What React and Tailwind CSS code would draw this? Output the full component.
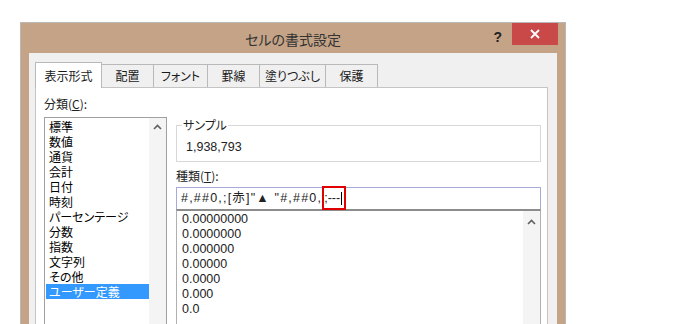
const categories = [
  '標準',
  '数値',
  '通貨',
  '会計',
  '日付',
  '時刻',
  'パーセンテージ',
  '分数',
  '指数',
  '文字列',
  'その他',
  'ユーザー定義',
];

const formats = ['0.00000000', '0.0000000', '0.000000', '0.00000', '0.0000', '0.000', '0.0'];

const tabs = [
  { label: '表示形式', w: 'w-[67px]' },
  { label: '配置', w: 'w-[53px]' },
  { label: 'フォント', w: 'w-[55px]' },
  { label: '罫線', w: 'w-[53px]' },
  { label: '塗りつぶし', w: 'w-[67px]' },
  { label: '保護', w: 'w-[53px]' },
];

const jp = "font-['Noto_Sans_CJK_JP','Noto_Sans',sans-serif] [font-feature-settings:'palt']";
const num = "font-['Liberation_Sans','Noto_Sans_CJK_JP',sans-serif]";

const UpArrow = () => (
  <svg width="9" height="6" viewBox="0 0 9 6">
    <polyline points="1,5 4.5,1.5 8,5" fill="none" stroke="#606060" strokeWidth="1.6" />
  </svg>
);

const App = () => {
  return (
    <div className={`w-[698px] h-[324px] bg-white overflow-hidden pt-[22px] pl-[20px] ${jp}`}>
      <div className="w-[546px] h-[330px] bg-[#c4a387] border border-[#b8b8b8] flex flex-col">
        {/* title bar */}
        <div className="h-[30px] grid grid-cols-[1fr_auto_1fr]">
          <div />
          <div className="pt-[7px] text-[14px] leading-[18px] text-[#333]">セルの書式設定</div>
          <div className="flex justify-end items-start pr-[7px]">
            <span className="mt-[4px] mr-[10px] text-[14px] font-bold text-[#222] font-['Liberation_Sans',sans-serif]">?</span>
            <div className="w-[46px] h-[22px] bg-[#c94848] flex items-center justify-center">
              <svg width="10" height="10" viewBox="0 0 10 10">
                <path d="M1 1 L9 9 M9 1 L1 9" stroke="white" strokeWidth="1.8" />
              </svg>
            </div>
          </div>
        </div>

        {/* body */}
        <div className="mx-[8px] flex-1 bg-[#f0f0f0] pt-[9px] pl-[6px] flex flex-col">
          <div className="flex items-end h-[25px]">
            {tabs.map((t, i) => (
              <div
                key={t.label}
                className={`${t.w} flex items-center justify-center text-[12px] text-[#1a1a1a] border border-b-0 border-[#b9b9b9] ${
                  i === 0 ? 'h-[26px] bg-white relative z-10 -mb-px' : 'h-[23px] bg-[#f0f0f0] -ml-px'
                }`}
              >
                {t.label}
              </div>
            ))}
          </div>

          <div className="w-[513px] flex-1 bg-white border border-[#c4c4c4] flex">
            {/* left column */}
            <div className="ml-[8px] pt-[8px] w-[123px]">
              <div className="text-[12px] leading-[16px] text-[#222]">
                分類(<span className="underline">C</span>):
              </div>
              <div className="mt-[5px] h-[220px] border border-[#a0a0a0] flex">
                <div className="flex-1 pt-[1px] pl-[1px]">
                  {categories.map((c, i) => (
                    <div
                      key={c}
                      className={`h-[15px] leading-[15px] text-[12px] pl-[3px] ${
                        i === categories.length - 1 ? 'bg-[#3399ff] text-white' : 'text-black'
                      }`}
                    >
                      {c}
                    </div>
                  ))}
                </div>
                <div className="w-[17px] bg-[#f4f4f4] flex justify-center pt-[6px]">
                  <UpArrow />
                </div>
              </div>
            </div>

            {/* right column */}
            <div className="ml-[9px] w-[365px] pt-[29px]">
              <fieldset className="h-[45px] border border-[#d8d8d8] pl-[9px]">
                <legend className="-ml-[4px] px-[1px] text-[12px] leading-[16px] text-[#222]">サンプル</legend>
                <div className={`${num} pt-[5px] text-[12.5px] text-[#222]`}>1,938,793</div>
              </fieldset>
              <div className="mt-[6px] text-[12px] leading-[16px] text-[#222]">
                種類(<span className="underline">T</span>):
              </div>
              <div className="mt-[3px] h-[22px] border border-[#a9aadc] border-b-0 flex items-center pl-[4px]">
                <span className={`${num} text-[12.5px] text-[#222] tracking-[1.2px] whitespace-nowrap`}>
                  #,##0,;[赤]"▲ "#,##0,
                </span>
                <span className="h-[24px] w-[24px] border-2 border-[#e00000] flex items-center -mt-[1px]">
                  <span className={`${num} text-[12.5px] text-[#222] whitespace-nowrap`}>;---</span>
                  <span className="w-px h-[13px] bg-black ml-[1px]" />
                </span>
              </div>
              <div className="h-[120px] border-t-2 border-t-[#8c8c8c] border-l border-r border-[#b0b0b0] flex">
                <div className="flex-1 pt-[1px] pl-[5px]">
                  {formats.map((f) => (
                    <div key={f} className={`${num} h-[15px] leading-[15px] text-[12.5px] text-[#222]`}>
                      {f}
                    </div>
                  ))}
                </div>
                <div className="w-[17px] bg-[#f4f4f4] flex justify-center pt-[8px]">
                  <UpArrow />
                </div>
              </div>
            </div>
          </div>
        </div>
      </div>
    </div>
  );
};

export default App;
